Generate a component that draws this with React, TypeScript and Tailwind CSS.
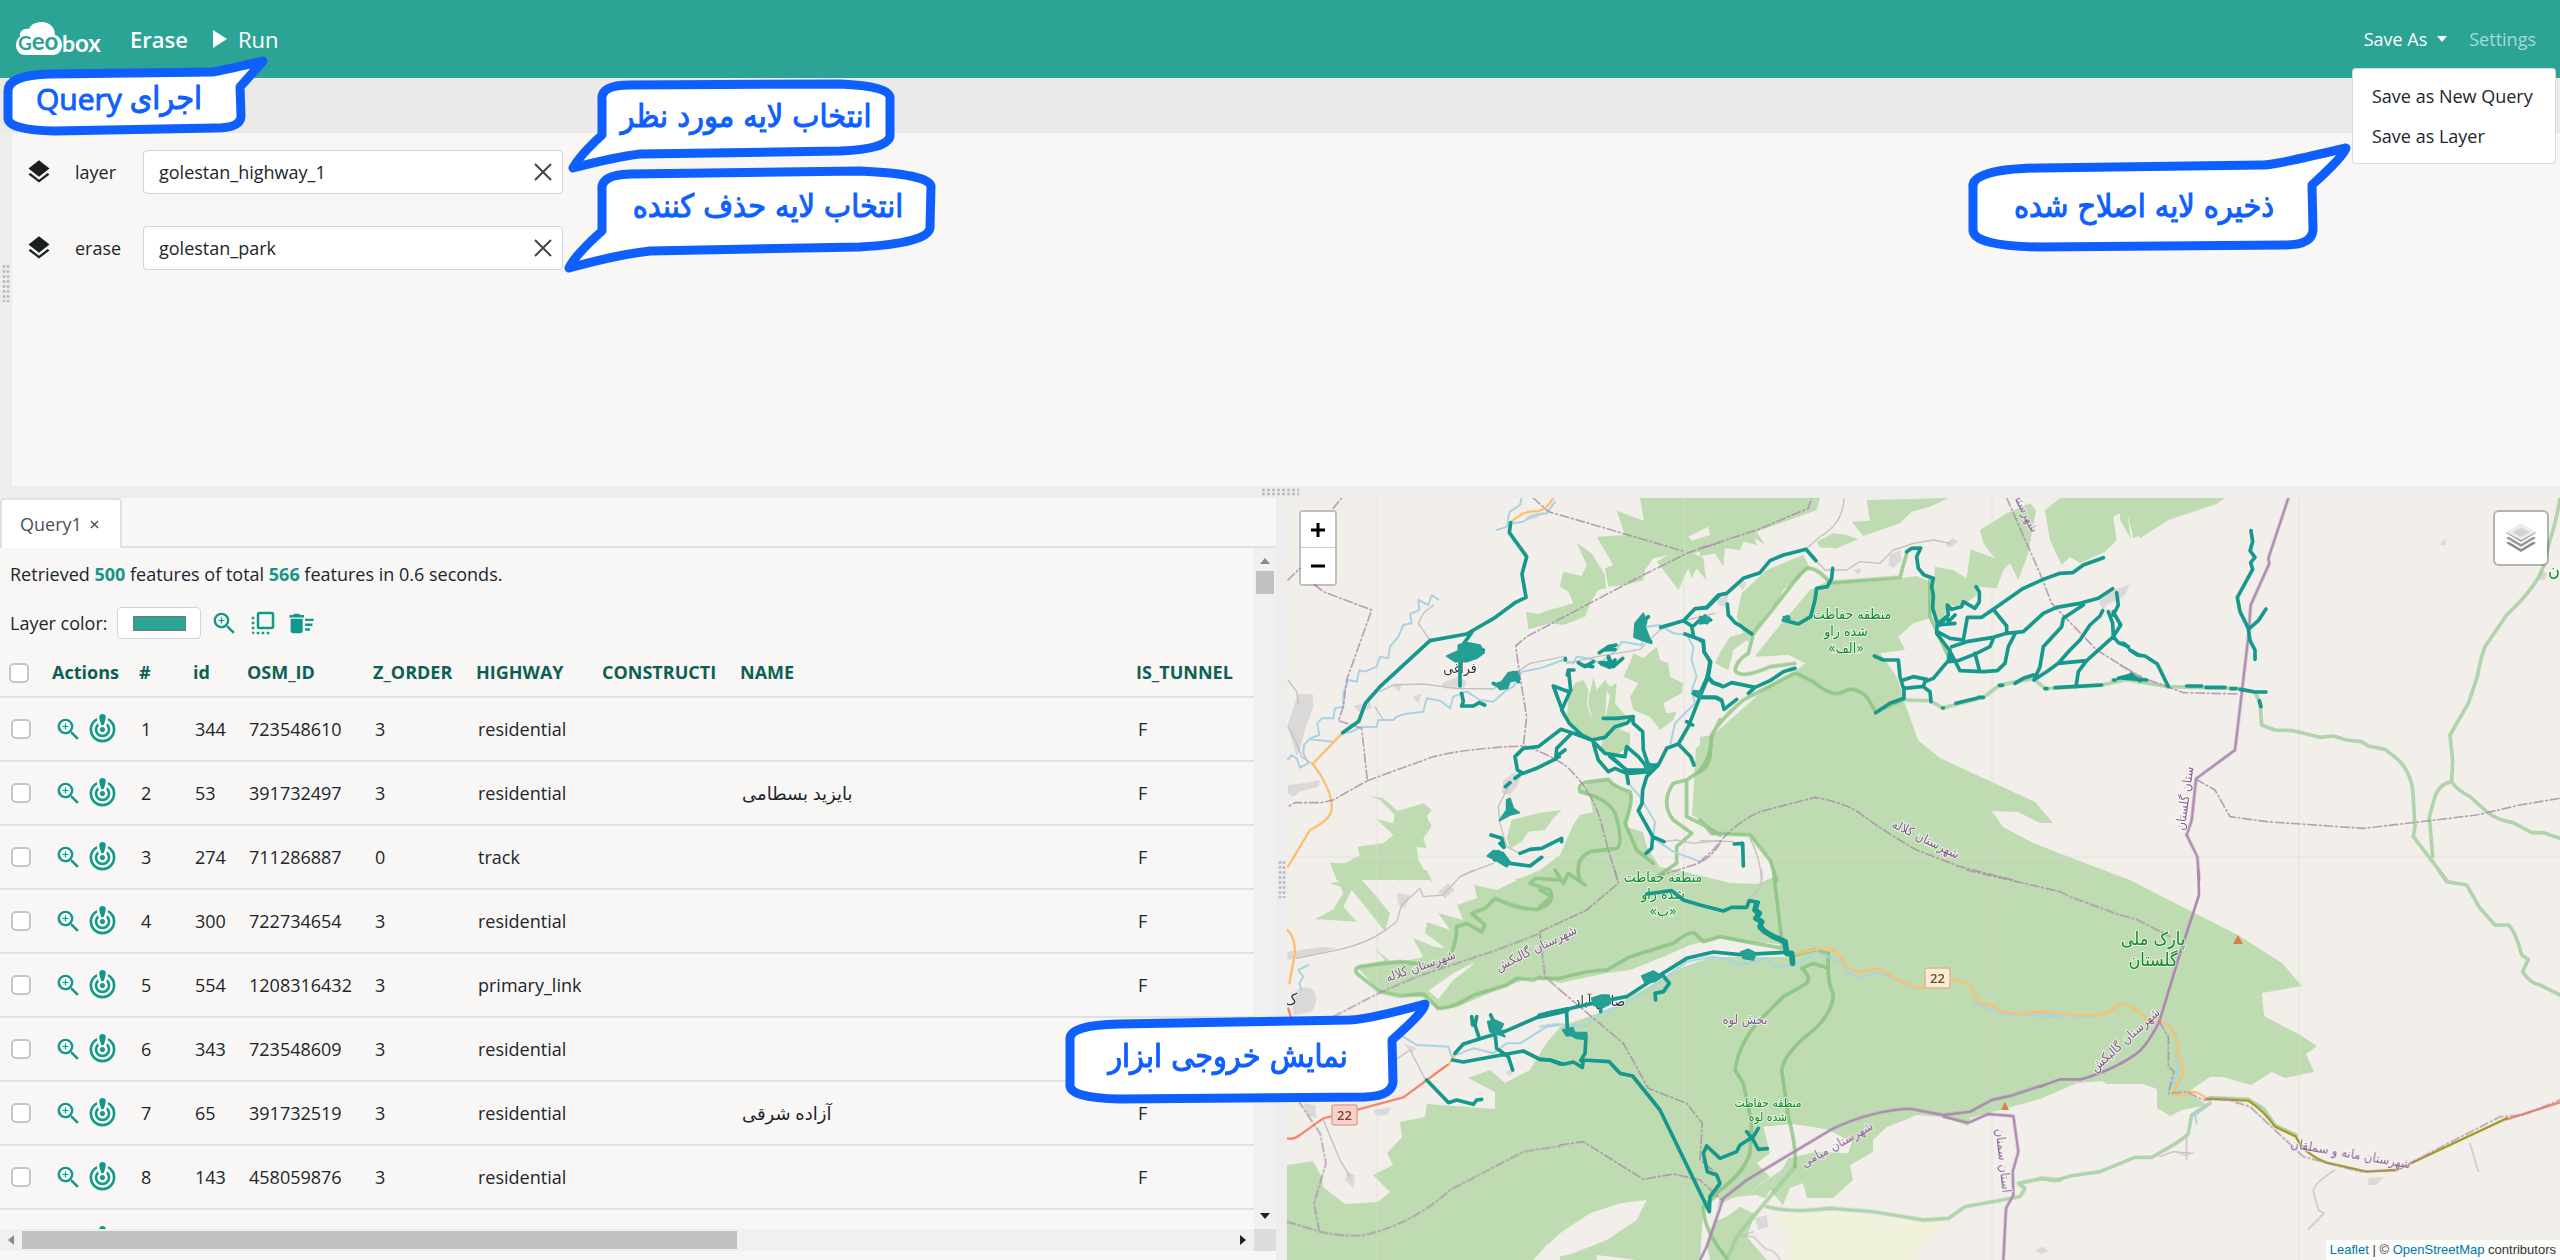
import React from "react";
import { MdLayers, MdZoomIn, MdFlipToFront, MdDeleteSweep, MdCrisisAlert } from "react-icons/md";

const FONT = "font-['Open_Sans','Noto_Sans','DejaVu_Sans',sans-serif]";

/* ------------------------------------------------------------------ */
/* Map data. Every tile has its own origin; one tile unit is 1/3 px.   */
/* ------------------------------------------------------------------ */

type Tile = "A" | "B" | "C" | "D" | "E" | "F" | "P";

const TILES: Record<Tile, string> = {
  A: "translate(1280 490) scale(0.33333)",
  B: "translate(1700 490) scale(0.33333)",
  C: "translate(2120 490) scale(0.33333)",
  D: "translate(1040 870) scale(0.33333)",
  E: "translate(1540 870) scale(0.33333)",
  F: "translate(2040 870) scale(0.33333)",
  P: "scale(1)",
};

type Shapes = Partial<Record<Tile, string>>;

const forest: Shapes = {
  P: `M1795 672L1837 695L1863 693L1876 713L1903 698L1918 740L1940 758L1983 778L2035 802L2053 823H2040L2018 812L1992 811L2003 827L2033 843L2077 860L2130 880L2157 894L2238 935L2282 963L2302 986L2262 993L2264 1016L2300 1035L2317 1046L2306 1054L2314 1072L2285 1078L2272 1072L2251 1085L2223 1077L2210 1077L2188 1092L2207 1105L2182 1110L2170 1116L2157 1108V1089L2143 1084H2107L2102 1081L2077 1083L2040 1099L1970 1118L1968 1126L1943 1117L1917 1115L1887 1127L1873 1140V1152L1850 1165L1853 1180L1833 1198H1807L1803 1183L1790 1188L1783 1205L1770 1190L1753 1220L1747 1237L1767 1260H1287V1165L1313 1161L1322 1177L1323 1187L1345 1204L1378 1202L1390 1192L1373 1175L1393 1165L1387 1153L1402 1137L1400 1122L1425 1117L1427 1104L1495 1109V1092L1468 1078L1490 1070L1505 1083L1530 1070L1545 1045L1560 1027L1607 1010L1683 967L1713 957L1785 957V940L1776 880L1768 855L1750 835H1713L1700 820L1692 815L1696 748L1704 742L1713 735L1767 687Z
      M1357 967L1385 960L1374 948L1390 961L1410 960L1423 957L1413 938L1435 947L1445 948L1425 933L1427 922L1450 930L1438 913L1463 920L1457 905L1477 898L1474 885L1497 890L1513 882L1540 870L1560 855L1573 825L1580 815L1593 812L1590 797L1580 790L1590 782L1607 780L1632 795L1630 813L1627 827L1643 832L1647 847L1660 867L1690 873L1730 883L1757 884L1776 876L1787 945L1767 943L1740 942L1720 938L1690 945L1663 957L1630 970L1607 973L1560 983L1540 978L1523 980L1490 993L1457 1007L1437 1010L1428 998L1400 995L1380 992Z`,
  A: `M1010 62L1092 92L1080 24H1320V170L1240 190L1270 205L1278 270L1250 235L1235 265L1225 235L1195 300L1150 240L1130 215L1165 195L1120 205L1095 240L1090 270L1040 285L985 290L975 235L1000 225L950 140L1035 135Z
      M890 158L935 190L975 255L978 295L955 300L930 340L915 380L850 405L810 400L745 418L738 365L775 372L800 362L828 355L880 340L865 305L840 290L850 245L905 258L920 225Z
      M1060 490L1090 505L1130 470L1140 510L1165 520L1170 560L1210 580L1205 610L1150 640L1160 670L1190 665L1180 690L1140 720L1110 680L1060 660L1050 620L1075 580L1030 560L1050 520Z
      M860 690L865 620L885 580L910 570L930 610L940 560L950 600L975 570L990 590L1010 580L1005 640L1040 680L1030 710L980 740L930 745L890 720Z
      M970 740L1010 715L1050 730L1050 770L1000 800L960 780Z
      M695 990L780 968L845 960L820 985L795 1020L745 1025L725 1055L690 1075L680 1045Z
      M150 1118L195 1120L240 1095L232 1070L310 1060L340 1035L290 988L340 1000L345 965L430 940L455 960L440 980L455 1008L430 1045L440 1075L490 1115L440 1075L410 1070L415 1110L450 1170H170Z
      M268 918L310 925L355 965L345 975L300 930Z
      M700 1170L750 1155L830 1170Z`,
  B: `M0 24H360L350 60L170 125L195 165L165 145L170 165L130 155L120 180L75 175L70 230L45 190L0 200Z
      M500 30L745 24L690 50L635 65L600 100L490 138L455 95L510 92Z
      M350 155L400 130L440 135L475 148L410 175L360 172Z
      M840 120L920 70L990 40L1008 60L985 190L955 270L930 220L910 240L890 295L840 290L825 320L780 350L750 345L715 405L695 360L705 230L760 240L800 265L812 178L885 205L850 160Z
      M1035 60L1080 24H1320V135L1300 145L1280 60L1240 80L1250 150L1215 185L1140 220L1110 200L1085 225L1050 150Z
      M285 545L315 520L265 495L160 505L220 430L330 300L380 275L600 265L650 258L690 275V385L640 400L595 440L615 480L540 490L590 560L612 625L527 668L410 620Z
      M130 430L110 380L125 310L200 240L310 195L330 235L250 300L200 400L150 470L140 450L100 480L85 540L45 520L65 480L90 440Z
      M0 740L40 735L25 830L0 845Z`,
  C: `M0 24H315L290 42L145 90L60 145L20 50L32 145L0 90Z`,
  D: `M870 40L960 25L1010 80L1050 130L1035 185L1000 140L955 85L935 60L910 110L950 155L870 150L825 148L880 118L910 70L885 10L920 0L940 40L900 50Z
      M1045 0L1080 35L1065 0ZM1140 0L1180 40L1160 0Z`,
};

const clearings: Shapes = {
  A: `M1285 110L1225 140L1235 152L1290 135ZM930 570L920 640L940 700L925 640ZM980 600L975 690L990 620Z`,
  B: `M105 545L130 500L150 440L215 350L240 345L235 370L200 430L165 500L265 495L315 520L285 535L210 555L120 562Z`,
  D: `M1165 362L1240 310L1305 275L1290 292L1240 330L1195 388ZM1480 1170L1520 1125L1560 1095V1170Z`,
  E: `M0 1150L60 1090L150 1030L240 1000L320 990L290 1050L200 1110L100 1150L20 1170H0ZM170 1155L290 1170H170Z
      M530 0L560 0L650 40L655 0Z
      M670 770L760 762L860 778L935 815L925 850L830 845L745 865L725 900L680 930L610 980L690 920L650 880L690 850Z
      M590 980L650 975L690 990L640 1030L600 1010L560 1040L510 1060L540 1000Z
      M490 1010L540 980L520 1060L500 1120L510 1170H480Z`,
};

const meadow: Shapes = {
  E: `M690 1040L870 1025L1150 1055L1250 1035L1190 1080L1120 1170H740L750 1100Z`,
};

const builtUp: Shapes = {
  A: `M55 612H98L100 650L75 720L60 780L50 800L24 710V700ZM24 885L80 878L120 870L115 890L60 905L40 920L24 910ZM485 580L535 560L560 575L550 600L490 595ZM222 648L270 635L275 655L235 665ZM330 585L365 580L360 605ZM398 622L425 610L415 640ZM670 870L700 850L725 855L710 890L690 915L665 910ZM740 78L790 65L770 85L740 90Z`,
  B: `M565 225L570 195L600 180L605 210L580 235ZM735 165L755 145L775 155L750 172ZM105 280L140 275L130 300ZM50 330L85 310L80 350L55 345ZM1240 300L1285 285L1270 320L1220 345L1210 360L1195 335ZM460 240L485 235L475 255Z`,
  C: `M960 165L975 145L978 165ZM0 295L30 285L15 315L0 320ZM1250 270L1262 240L1282 250L1275 270Z`,
  D: `M742 245L850 230L890 235L800 262L742 270ZM757 380Q770 350 800 352T828 390T800 430T760 435ZM1070 70L1110 75L1095 115L1075 105ZM1195 65L1225 40L1245 60L1215 85ZM1090 520L1130 535L1115 550ZM1000 720L1055 712L1040 735L1010 738ZM920 905L945 915L940 955L915 930ZM1395 605L1420 600L1410 620ZM790 700L825 705L830 745L800 735Z`,
  E: `M645 1045L680 1035L685 1070L655 1080ZM1485 1140L1510 1130L1525 1145L1500 1152Z`,
  F: `M985 925L1030 920L1010 945L985 945ZM0 1135L25 1142L5 1150ZM405 848L455 848L440 860Z`,
};

const rivers: Shapes = {
  A: `M475 328L455 315L445 345L415 330L418 360L390 372L395 400L370 405L355 440L330 470L325 505L300 500L290 530L255 545L238 540L230 575L205 570L190 610L190 650L165 655L160 685L125 685L112 700L118 735L90 745L72 765L70 790L85 820L60 833L50 805L35 795L24 808
      M90 748L160 755L190 728L215 725L240 712L290 710L295 690L340 690L350 680L375 672L430 665L440 625L480 632L510 655L520 620L560 605L600 630L640 635L680 600L700 590L725 545L780 535L850 510L880 520L890 500L940 508L960 520L1010 480L1025 455L1085 465L1100 410L1140 405L1180 430L1220 435L1240 470L1235 510L1250 560L1235 600L1245 640L1185 700L1172 760
      M725 24L720 45L690 65L685 80L682 110L650 120M825 35L800 70L760 76L730 95L700 100M1045 880L1080 920L1125 995L1120 1045L1180 1085L1260 1115`,
  D: `M1090 500L1130 525L1225 530L1235 560L1300 535L1360 550L1400 520L1440 520L1520 470L1560 465M805 285L775 300L790 320L778 340L785 360`,
  E: `M0 470L50 462L130 470L190 425L260 400L340 350L440 275L520 260L570 270L600 285L680 265L705 288L760 288L830 247L905 275L925 312L965 322L1010 306L1070 330L1130 358M1300 395L1320 406L1385 432L1560 440`,
  F: `M0 431L170 442M380 455L405 490L415 520L408 560L415 600L400 640M470 760L465 735L500 710`,
};

const minorRoads: Shapes = {
  A: `M24 570L50 605L55 640M24 710L50 760L65 800L98 822M450 450L415 400L430 370L460 345M300 605L340 585L430 582L530 595L640 597L690 560L750 520L850 500M860 520L950 500L1010 490L1080 478L1140 420L1220 390L1305 370M690 880L655 950L660 1000L680 1070L720 1090M640 1120L600 1135L540 1160M1152 1055L1190 1050L1240 1060L1320 1052M285 650L310 690`,
  B: `M432 24Q430 100 360 140L320 175M348 212L375 240L440 240L480 215L540 220L580 180L640 160L700 150L750 160M0 1052L100 1055M150 1045Q180 1100 185 1170`,
  D: `M770 265L900 238Q980 220 1030 185L1070 155L1085 105L1140 55L1150 80L1210 75L1260 20L1300 0M1050 580L1110 540L1160 635M1020 690V640M850 750L900 870L930 920`,
  E: `M665 0Q670 60 630 85M640 1085L600 1100L640 1100L680 1140Q700 1135 720 1170`,
  F: `M885 900Q820 940 820 965L835 1020L852 1030L805 1078M1290 820L1315 905M440 800V870M360 860L400 845L460 850`,
};

const parkEdges: Shapes = {
  A: `M900 905Q890 880 930 875L985 868Q1000 890 1050 905Q1062 930 1035 1000L1070 1080L1120 1120M900 905Q1000 930 1010 985Q1030 1065 1010 1075L930 1085Q880 1110 900 1170M1320 690L1295 740Q1290 820 1250 850L1220 870V980L1280 1010L1320 1035M1220 870L1180 880Q1140 940 1180 990L1235 1030L1190 1070V1120L1130 1160`,
  B: `M0 990L35 1030L150 1035L210 1110L230 1170M0 845Q25 830 30 800L35 735Q60 690 130 630L285 548M285 520L210 530Q120 570 105 540Q110 510 145 490L160 430L240 330Q300 250 320 235Q350 230 390 278L600 262L620 190M690 270V380L745 500M285 548L340 575Q400 625 430 605T500 620L527 665L612 628`,
  D: `M1020 365L950 310Q940 290 970 288L1080 275L1200 290Q1250 250 1250 170L1280 160L1325 185L1335 165L1295 130L1335 115L1365 85Q1440 120 1490 118Q1550 100 1530 60L1470 40L1485 25L1560 30M1020 365L1080 378L1150 372L1195 415Q1240 415 1300 375L1400 345L1430 325L1480 330L1500 322`,
  E: `M765 255L820 240L865 250Q860 340 880 370Q880 440 790 505Q730 560 725 600L745 740Q770 830 765 890M865 295L820 280L785 295Q815 320 800 340L730 380L690 420Q600 500 585 600L610 640L635 760L630 850Q610 910 540 960L490 1010Q490 1080 560 1165M0 325L60 325Q150 300 200 300L270 260L400 220Q450 180 465 190L490 215L540 200L600 212L730 235M700 0L728 235M0 60L35 80L0 110M45 0L70 40L85 10L135 45`,
};

const softEdges: Shapes = {
  B: `M620 630L690 632L728 654L850 622L900 585L1000 565L1035 596L1205 585L1320 560`,
  C: `M0 565L145 590L360 596L405 606L420 640L425 705L465 720L520 722L600 742L640 738L680 750L725 755L745 768L795 778L830 805Q880 850 880 930L885 1010L880 1040L930 1105L980 1170M1320 24Q1310 90 1290 150L1270 230Q1250 290 1160 375L1095 470Q1080 510 1072 560L1045 640L990 735L998 810L995 875Q1010 900 1050 920L1100 965Q1130 990 1180 998L1235 1028H1270L1320 1045M995 875Q960 880 945 920L928 980L938 1100`,
  E: `M765 890L640 1040L590 1100L560 1170M680 1010Q760 1030 870 1015L1000 1025L1150 1050L1225 1045L1275 1010L1440 980L1455 955L1435 940L1510 925L1560 930`,
  F: `M1195 0L1220 35L1280 45L1320 115L1365 165H1405Q1425 180 1445 255L1465 268L1448 305Q1470 340 1500 345L1560 375M510 700L455 735L445 790Q430 810 335 862H285L180 905L90 918L45 932L0 925M510 683L625 688L670 716L705 766L768 795`,
};

const districtLines: Shapes = {
  A: `M24 270L60 235M105 285L130 305L275 360L200 570L190 650L175 692L245 715L262 872L160 930L125 938H45L24 950M262 872L460 800Q560 775 730 768L740 680L720 560L707 468L740 440L1080 260L1225 188L1320 158M760 24L805 65L960 110L1215 185M160 55L185 24M735 768Q850 810 880 850Q930 900 960 985L985 1080L1012 1170M1320 1060Q1290 1110 1240 1125L1130 1160`,
  B: `M0 175L170 120L325 55L335 24M0 1115L40 1080Q100 1000 180 965L345 922Q440 940 480 970Q560 1030 650 1080L780 1130L940 1170M920 24L1020 250L1055 340L1190 480L1320 560`,
  C: `M0 525L60 560L190 608L355 612M228 868L285 900L330 980L440 995L730 1015L930 992L1070 975L1200 945L1320 925`,
  D: `M880 440L1015 370L1130 320L1370 240L1500 190M1500 190L1515 320L1560 360M742 1055L840 1085Q950 1110 1010 1085Q1130 1050 1230 960L1450 845L1560 828M775 692L840 790L858 880L822 1000L838 1085`,
  E: `M0 185L140 120L235 40L225 0M60 360L250 520L325 655L440 700L487 760L480 870L530 910M60 825L130 815L310 928L400 912L480 930L545 990M1280 0L1560 65`,
  F: `M60 65L90 80L240 135L290 148L390 200M358 455L385 500V590L402 605L385 670L440 665L490 690L560 688L630 710L790 860L960 905L1070 900L1380 740L1450 735L1560 690`,
};

const provinceLines: Shapes = {
  C: `M505 24L445 205L448 220L392 345L385 440L345 780L228 866L215 990L200 1035L232 1100L237 1170`,
  E: `M1510 645L1420 675L1355 690L1290 725L1210 735L1110 716Q1000 720 880 775L620 930L550 985L500 1130L480 1170M1210 740L1285 758L1345 732L1420 738L1435 845L1418 905L1420 975L1398 1015L1390 1170`,
  F: `M475 0L477 75L420 250L358 455Q320 530 290 550Q230 595 125 628H60L0 650`,
};

const primaryRoads: Shapes = {
  A: `M820 24Q800 60 770 64Q730 60 692 98M188 728L98 822L122 855Q160 920 155 960Q150 990 90 1020L24 1130`,
  D: `M742 180Q765 200 765 250L748 340M1245 552L1225 585`,
  E: `M765 252L830 238L870 235Q900 250 915 285Q950 320 1000 295Q1040 300 1060 325L1130 352H1155M1230 325L1290 345L1320 400L1355 405L1385 425L1450 432L1480 425L1510 427`,
  F: `M0 425L100 433L170 437Q210 430 240 400L270 410Q310 430 320 450L358 455Q410 465 415 550L430 605L400 670Q420 685 450 665Q480 665 500 688`,
};

const trunkRoads: Shapes = {
  D: `M1222 585L1090 682L950 720L850 745Q800 780 780 795T742 805M745 415L752 440`,
  F: `M1400 748L1560 697`,
};

const valleyRoad: Shapes = {
  F: `M500 686L625 692Q670 720 705 770L768 800Q790 850 860 878L980 905L1070 900L1400 745`,
};

const resultLines: Shapes = {
  A: `M692 98L688 128L740 200L726 252L738 322L705 338L640 386L560 432L450 452L300 590L256 640L236 694L188 728
      M575 428L550 462M540 500V588M545 610L550 635L545 648H580L598 638L614 645
      M1142 412L1210 392L1245 356L1280 354L1320 315M1210 392L1235 408L1240 436M1240 408L1265 385L1292 390M1275 378L1280 398
      M1215 432L1270 452L1272 485L1292 515L1285 560L1260 620L1225 710L1195 762L1160 775L1135 825L1100 860L1088 900L1086 940L1075 962L1110 1025L1118 1040L1152 1055M1118 1040L1115 1075L1098 1090M1195 762L1232 800L1242 825M1220 695L1238 705
      M1240 610L1260 622H1305L1320 630M1282 558L1300 578L1320 584
      M958 488L985 470L1008 465M970 480L1005 478M960 518L990 520L985 500L1000 530L1028 505M965 522L990 532L1005 510M895 518L915 530L940 515M905 525L938 530
      M856 505V510M862 555L865 540L882 540M866 545L872 600L845 660L868 700L905 735L935 750L975 742L1005 710L1040 700L1060 680L1010 685H970M866 605L820 588L845 655
      M935 750L880 730L843 718L775 770L730 775L705 800L712 840L730 850L770 835L830 805M870 735L830 775L828 800L855 780M828 800H838M725 850L705 865M690 878L676 890
      M1058 680L1060 700L1088 725L1090 780L1105 825L1130 825M940 755L975 790L1035 800L1040 770L1075 800L1100 830M940 760L955 810L985 845L1005 835L1040 850L1045 880M990 800L1040 840L1100 840L1130 825M1000 805L1050 850L1105 845
      M633 1035L665 1045L672 1072L660 1060M720 1090L750 1078L785 1075L845 1045V1055M690 1120L750 1128L785 1102
      M1085 400L1105 380M1095 440L1112 455M610 480L590 500M640 580L660 590M700 548L715 575M635 1092L645 1110M655 1085L660 1105`,
  B: `M0 354L20 352L55 315L80 310L130 265L180 248L210 212L250 195L318 178L348 212M82 342L85 375L105 398L125 410L155 432M398 235L395 265L382 290L350 295L345 330L332 380L295 402L250 390M262 380L265 392M0 390H28
      M0 450L10 455L12 485L30 515L22 560L0 610M22 560L38 578L70 590L95 578L165 592L210 572L250 545L285 535M165 592L145 610M0 622H50L65 630L72 658L110 628
      M620 185L635 175L662 174L650 200L655 235L672 255L700 265L695 290L700 315L698 355L712 400L710 430L748 480L780 542L850 545L892 542L915 520L925 470L945 432M712 405L765 400M715 400L745 375L742 345L755 358L785 350L790 335L825 355L838 335V305L828 290M720 405L740 380L745 395L765 375
      M712 425L750 445L790 450L802 382H845L880 358L970 295L1030 268L1080 250L1118 248L1150 225L1210 203M880 358L920 408V430M755 470L800 455L880 442L920 430L970 425L1030 370L1070 352L1140 340L1195 325L1238 296M750 480L745 515L775 512L830 490L870 470L880 445M755 500L700 565L675 575L670 590L690 605L693 635M610 570L640 560L680 568M612 595L665 590M523 498L550 510H595L600 560L612 600V625L570 640L527 668M825 490L838 540
      M1150 345L1090 385L1085 410L1030 470L1020 530L1002 570M1005 568L1040 545L1075 520L1110 480L1140 450L1170 405L1200 378L1208 362M945 580L970 565L1000 555M1075 520L1160 512L1240 440L1262 405L1245 375M1250 308L1255 345L1240 375V365M1225 365L1238 400L1240 440L1255 458L1285 470M1160 512L1135 545L1128 590
      M728 654H730M768 640L830 625M835 622H850M898 586H908M1035 596H1041M1065 593L1205 585M1240 570H1246M1255 565L1295 555L1320 572M1290 480L1320 497M103 1062L128 1060L130 1128`,
  C: `M393 122L398 155L390 182L405 202L392 218L398 238L352 322L360 365L385 415L390 452L405 480V508M438 357L415 392L385 418M0 460H12L25 472M33 482L52 495L75 498L112 522L145 590M5 564L80 570M20 562L35 552M200 588H245M258 592H315M333 596H348M360 598L405 606H438M418 632L423 650M0 400V408`,
  D: `M1245 550L1270 522L1330 503L1400 482L1520 430L1560 422M1295 440L1298 465M1310 440L1305 465L1317 502M1352 435L1365 465M1365 490L1370 535L1405 560L1418 600M1238 570L1270 576L1450 543L1500 568L1530 570L1560 582M1160 630L1218 690L1225 698L1250 690L1300 703L1310 690L1325 688`,
  E: `M0 438L80 418L180 395L260 380L340 328L440 265L520 246L600 254L735 247M370 318L388 340L370 365L345 370L347 390M182 400V425M80 425L82 480L105 500L138 498L135 550L122 572M0 568L30 570L70 583L100 576L127 592L130 570L208 575L240 610L278 618L360 720L508 1025L510 980L540 940L530 915L502 905L490 850L500 828L540 865L590 845L600 825L640 800L655 775M620 785L640 810L655 838L682 836M320 72L395 62L430 90L480 105L550 123L575 112H620L628 92L655 97`,
};

const resultThick: Shapes = {
  E: `M650 100L645 120L658 130L648 145L665 155L660 170L675 185L700 200L735 215L740 250L755 250L758 280M0 438L80 420`,
};

const resultBlobs: Shapes = {
  A: `M500 498L535 482V465L560 458L600 465L613 488L590 505L560 515L525 515ZM645 582L665 575L685 548L712 545L720 568L690 575L682 595L660 598ZM1065 400L1090 370L1100 395L1095 410L1105 435L1115 460L1090 452L1062 442ZM680 930L690 925L700 955L718 968L690 975L658 992L680 960ZM622 1098L640 1082L670 1088L692 1118L680 1130L650 1112ZM1090 820L1110 820L1120 835L1100 845ZM1240 602L1268 605L1260 625Z`,
  B: `M250 380L268 380L270 395L252 392ZM0 380L28 382L25 398L0 402Z`,
  D: `M1343 455L1365 450L1390 462L1382 480L1395 500L1372 492L1350 485Z`,
  E: `M155 385L185 375L207 375L212 400L185 415L160 405ZM305 318L340 303L368 320L345 335L315 338ZM602 246L625 238L648 250L640 270L610 265ZM68 480L98 473L108 495L80 498ZM105 488L140 488L138 508L110 505Z`,
};

interface LayerProps {
  data: Shapes;
  className: string;
  dash?: string;
}

/** Draws one feature class; widths are given in tile units. */
function MapLayer({ data, className, dash }: LayerProps) {
  return (
    <g className={className} strokeLinejoin="round" strokeLinecap="round" strokeDasharray={dash}>
      {(Object.keys(data) as Tile[]).map((t) => (
        <path key={t} transform={TILES[t]} d={data[t]} />
      ))}
    </g>
  );
}

interface LabelData {
  x: number;
  y: number;
  r?: number;
  s: number;
  c: string;
  t: string;
}

const PURPLE = "fill-[#875a90]";
const GREEN = "fill-[#0d8a2c]";
const labels: LabelData[] = [
  { x: 1460, y: 673, s: 14, c: "fill-[#333333]", t: "فراغی" },
  { x: 1852, y: 619, s: 14, c: GREEN, t: "منطقه حفاظت" },
  { x: 1846, y: 636, s: 14, c: GREEN, t: "شده زاو" },
  { x: 1846, y: 653, s: 14, c: GREEN, t: "«الف»" },
  { x: 1663, y: 882, s: 14, c: GREEN, t: "منطقه حفاظت" },
  { x: 1663, y: 899, s: 14, c: GREEN, t: "شده زاو" },
  { x: 1663, y: 916, s: 14, c: GREEN, t: "«ب»" },
  { x: 1768, y: 1107, s: 12, c: GREEN, t: "منطقه حفاظت" },
  { x: 1768, y: 1121, s: 12, c: GREEN, t: "شده لوه" },
  { x: 2153, y: 945, s: 18, c: GREEN, t: "پارک ملی" },
  { x: 2153, y: 966, s: 18, c: GREEN, t: "گلستان" },
  { x: 2554, y: 576, s: 18, c: GREEN, t: "ن" },
  { x: 1600, y: 1006, s: 14, c: "fill-[#333333]", t: "صادق آباد" },
  { x: 1291, y: 1005, s: 16, c: "fill-[#333333]", t: "ک" },
  { x: 1745, y: 1024, s: 13, c: PURPLE, t: "بخش لوه" },
  { x: 1924, y: 843, r: 26, s: 13, c: PURPLE, t: "شهرستان کلاله" },
  { x: 1422, y: 970, r: -19, s: 13, c: PURPLE, t: "شهرستان کلاله" },
  { x: 1538, y: 952, r: -26, s: 13, c: PURPLE, t: "شهرستان گالیکش" },
  { x: 2128, y: 1043, r: -42, s: 13, c: PURPLE, t: "شهرستان گالیکش" },
  { x: 2189, y: 799, r: -82, s: 13, c: PURPLE, t: "ستان گلستان" },
  { x: 2023, y: 516, r: 64, s: 13, c: PURPLE, t: "شهرستا" },
  { x: 1839, y: 1148, r: -29, s: 13, c: PURPLE, t: "شهرستان میامی" },
  { x: 1999, y: 1161, r: 84, s: 13, c: PURPLE, t: "استان سمنان" },
  { x: 2350, y: 1158, r: 10, s: 13, c: PURPLE, t: "شهرستان مانه و سملقان" },
];

function Shield({ x, y, className, textClass }: { x: number; y: number; className: string; textClass: string }) {
  return (
    <g>
      <rect x={x} y={y} width="25" height="20" rx="2" className={className} strokeWidth="1.5" />
      <text x={x + 12.5} y={y + 15} textAnchor="middle" fontSize="13" fontWeight="600" className={textClass}>
        22
      </text>
    </g>
  );
}

function MapView() {
  return (
    <section aria-label="Map" className="relative h-full overflow-hidden bg-[#f2efea]">
      <svg
        className="absolute inset-0 h-full w-full"
        viewBox="1287 498 1273 762"
        preserveAspectRatio="xMinYMin slice"
        aria-hidden="true"
      >
        <MapLayer data={forest} className="fill-[#bfdbb1]" />
        <MapLayer data={clearings} className="fill-[#f2efea]" />
        <MapLayer data={meadow} className="fill-[#f0f2dc]" />
        <MapLayer data={builtUp} className="fill-[#dbd9d8]" />
        <path d="M1377 498V1260M1684 498V1260M1992 498V1260M2299 498V1260M1287 857H2560" className="stroke-[#d8dcd2] opacity-60" />
        <MapLayer data={softEdges} className="fill-none stroke-[#9fcd9b] stroke-[11] opacity-80" />
        <MapLayer data={parkEdges} className="fill-none stroke-[#84c07d] stroke-[11] opacity-75" />
        <MapLayer data={rivers} className="fill-none stroke-[#a9d3e3] stroke-[6]" />
        <MapLayer data={minorRoads} className="fill-none stroke-[#c3c0c2] stroke-[4]" />
        <MapLayer data={primaryRoads} className="fill-none stroke-[#fbbf72] stroke-[7]" />
        <MapLayer data={trunkRoads} className="fill-none stroke-[#f98666] stroke-[7]" />
        <MapLayer data={valleyRoad} className="fill-none stroke-[#a89a26] stroke-[7]" />
        <MapLayer data={districtLines} className="fill-none stroke-[#a98bab] stroke-[5] opacity-80" dash="26 9 5 9" />
        <MapLayer data={provinceLines} className="fill-none stroke-[#ab89b0] stroke-[8]" />
        <path d="M2233 944l5-9l5 9zM2001 1110l4-8l4 8z" className="fill-[#d97f42]" />
        <g className="font-['DejaVu_Sans_Condensed','DejaVu_Sans',sans-serif]">
          {labels.map((l, i) => (
            <text
              key={i}
              x={l.x}
              y={l.y}
              fontSize={l.s}
              textAnchor="middle"
              direction="rtl"
              transform={l.r ? `rotate(${l.r} ${l.x} ${l.y})` : undefined}
              className={l.c}
              stroke="#ffffff"
              strokeOpacity="0.6"
              strokeWidth="2"
              paintOrder="stroke"
            >
              {l.t}
            </text>
          ))}
        </g>
        <MapLayer data={resultLines} className="fill-none stroke-[#16998c] stroke-[11]" />
        <MapLayer data={resultThick} className="fill-none stroke-[#16998c] stroke-[17]" />
        <MapLayer data={resultBlobs} className="fill-[#259f93] stroke-[#259f93] stroke-[5]" />
        <Shield x={1332} y={1105} className="fill-[#f6d3c8] stroke-[#e3a594]" textClass="fill-[#7d4030]" />
        <Shield x={1925} y={968} className="fill-[#fbeada] stroke-[#d9b98c]" textClass="fill-[#6b5320]" />
      </svg>

      <div className="absolute top-3 left-3 flex w-[38px] flex-col rounded border-2 border-black/20 bg-clip-padding">
        <button type="button" aria-label="Zoom in" className="flex h-9 items-center justify-center rounded-t-xs border-b border-[#cccccc] bg-white">
          <svg viewBox="0 0 16 16" className="size-4 stroke-black stroke-[3]"><path d="M8 1V15M1 8H15" /></svg>
        </button>
        <button type="button" aria-label="Zoom out" className="flex h-9 items-center justify-center rounded-b-xs bg-white">
          <svg viewBox="0 0 16 16" className="size-4 stroke-black stroke-[3]"><path d="M1 8H15" /></svg>
        </button>
      </div>

      <button type="button" aria-label="Layers" className="absolute top-3 right-[11px] flex size-14 items-center justify-center rounded-md border-2 border-black/25 bg-white bg-clip-padding">
        <svg viewBox="0 0 32 30" className="h-[30px] w-8">
          <path d="M1 20L16 12L31 20L16 29Z" fill="#8d8d8d" />
          <path d="M1 17L16 9L31 17L16 26Z" fill="#ffffff" />
          <path d="M1 15L16 7L31 15L16 24Z" fill="#9a9a9a" />
          <path d="M1 12L16 4L31 12L16 21Z" fill="#ffffff" />
          <path d="M1 10L16 2L31 10L16 19Z" fill="#a5a5a5" />
          <path d="M1 9L16 0L31 9L16 17Z" fill="#ededed" />
          <path d="M7 9L16 5L25 9L16 14Z" fill="#d2d2d2" />
        </svg>
      </button>

      <p className="absolute right-0 bottom-0 bg-white/80 px-1 font-['Liberation_Sans',sans-serif] text-[13px] leading-5 text-[#333333]">
        <a href="#leaflet" className="text-[#0078a8]">Leaflet</a> | ©{" "}
        <a href="#osm" className="text-[#0078a8]">OpenStreetMap</a> contributors
      </p>
    </section>
  );
}

/* ------------------------------------------------------------------ */
/* Header                                                              */
/* ------------------------------------------------------------------ */

function Logo() {
  return (
    <svg viewBox="0 0 88 34" className="h-[34px] w-[88px]" role="img" aria-label="Geobox">
      <path d="M9 33C3 33 0 28 0 23C0 19 2 16 4 15C3 9 8 6 13 7C15 2 20 0 26 0C33 0 39 5 39 13C43 14 46 18 46 23C46 29 42 33 37 33Z" fill="#ffffff" />
      <g className="font-['Lato',sans-serif]" fontWeight="700" fontSize="24">
        <text x="2" y="28" fill="#2ba395"><tspan fontSize="19">G</tspan>eo</text>
        <text x="46" y="30" fill="#ffffff"><tspan fontSize="23">b</tspan>ox</text>
      </g>
    </svg>
  );
}

function Header() {
  return (
    <header className="relative flex h-[78px] shrink-0 items-center bg-[#2ba395] pr-6 pl-4 text-white">
      <Logo />
      <h1 className="ml-[26px] text-[22px] font-semibold">Erase</h1>
      <button type="button" className="ml-6 flex items-center gap-[10px] text-[22px]">
        <svg viewBox="0 0 16 20" className="h-5 w-4" fill="#ffffff" aria-hidden="true"><path d="M1 1L15 10L1 19Z" /></svg>
        Run
      </button>
      <nav className="ml-auto flex items-center gap-[22px] text-[18px]">
        <button type="button" aria-expanded="true" className="flex items-center gap-[10px]">
          Save As
          <svg viewBox="0 0 10 6" className="h-[6px] w-[10px]" fill="#ffffff" aria-hidden="true"><path d="M0 0H10L5 6Z" /></svg>
        </button>
        <a href="#settings" className="text-white/60">Settings</a>
      </nav>
      <ul className="absolute top-[68px] right-1 z-10 flex h-24 w-[204px] flex-col justify-center rounded border border-black/15 bg-white text-[18px] leading-10 text-[#212529]">
        <li><button type="button" className="pl-[19px]">Save as New Query</button></li>
        <li><button type="button" className="pl-[19px]">Save as Layer</button></li>
      </ul>
    </header>
  );
}

/* ------------------------------------------------------------------ */
/* Parameters                                                          */
/* ------------------------------------------------------------------ */

function ParamField({ name, value }: { name: string; value: string }) {
  return (
    <div className="flex h-[44px] items-center">
      <MdLayers className="size-7 text-[#1c1f22]" aria-hidden="true" />
      <label htmlFor={`param-${name}`} className="ml-[22px] w-[68px] text-[18px] text-[#212529]">{name}</label>
      <div className="flex h-[44px] w-[420px] items-center rounded border border-[#ced4da] bg-white pr-[10px]">
        <input id={`param-${name}`} type="text" defaultValue={value} className="min-w-0 flex-1 bg-transparent px-[15px] text-[18px] text-[#212529] outline-none" />
        <button type="button" aria-label={`Clear ${name}`}>
          <svg viewBox="0 0 18 18" className="size-[18px] stroke-[#444444] stroke-2"><path d="M1 1L17 17M17 1L1 17" /></svg>
        </button>
      </div>
    </div>
  );
}

function Dots({ vertical = false }: { vertical?: boolean }) {
  return (
    <span
      aria-hidden="true"
      className={
        vertical
          ? "h-[38px] w-[8px] bg-[radial-gradient(circle,#bcbcbc_1px,transparent_2px)] bg-[size:4px_5px]"
          : "h-[8px] w-[38px] bg-[radial-gradient(circle,#bcbcbc_1px,transparent_2px)] bg-[size:5px_4px]"
      }
    />
  );
}

/* ------------------------------------------------------------------ */
/* Results table                                                       */
/* ------------------------------------------------------------------ */

interface Feature {
  n: number;
  id: string;
  osm: string;
  z: string;
  highway: string;
  name: string;
}

const features: Feature[] = [
  { n: 1, id: "344", osm: "723548610", z: "3", highway: "residential", name: "" },
  { n: 2, id: "53", osm: "391732497", z: "3", highway: "residential", name: "بایزید بسطامی" },
  { n: 3, id: "274", osm: "711286887", z: "0", highway: "track", name: "" },
  { n: 4, id: "300", osm: "722734654", z: "3", highway: "residential", name: "" },
  { n: 5, id: "554", osm: "1208316432", z: "3", highway: "primary_link", name: "" },
  { n: 6, id: "343", osm: "723548609", z: "3", highway: "residential", name: "" },
  { n: 7, id: "65", osm: "391732519", z: "3", highway: "residential", name: "آزاده شرقی" },
  { n: 8, id: "143", osm: "458059876", z: "3", highway: "residential", name: "" },
];

const CHECKBOX = "block size-5 appearance-none rounded-[5px] border-2 border-[#c3c5c7] bg-white checked:bg-[#2ba395]";

function RowActions({ n }: { n: number }) {
  return (
    <div className="flex items-center gap-1 text-[#12988a]">
      <button type="button" aria-label={`Zoom to feature ${n}`}><MdZoomIn className="size-[29px]" /></button>
      <button type="button" aria-label={`Flash feature ${n}`}><MdCrisisAlert className="size-[31px]" /></button>
    </div>
  );
}

function ResultsTable() {
  return (
    <table className="w-full table-fixed border-collapse text-left text-[18px] text-[#212529]">
      <colgroup>
        <col className="w-[44px]" />
        <col className="w-[87px]" />
        <col className="w-[54px]" />
        <col className="w-[54px]" />
        <col className="w-[126px]" />
        <col className="w-[103px]" />
        <col className="w-[126px]" />
        <col className="w-[138px]" />
        <col />
        <col className="w-[126px]" />
      </colgroup>
      <thead>
        <tr className="h-12 border-b-2 border-[#dee2e6] text-[#0d5f55]">
          <th className="pl-[9px]"><input type="checkbox" aria-label="Select all" className={CHECKBOX} /></th>
          <th className="pl-2">Actions</th>
          <th className="pl-2">#</th>
          <th className="pl-2">id</th>
          <th className="pl-2">OSM_ID</th>
          <th className="pl-2">Z_ORDER</th>
          <th className="pl-2">HIGHWAY</th>
          <th className="pl-2">CONSTRUCTI</th>
          <th className="pl-2">NAME</th>
          <th className="pl-2">IS_TUNNEL</th>
        </tr>
      </thead>
      <tbody>
        {features.map((f) => (
          <tr key={f.n} className="h-16 border-b-2 border-[#dee2e6]">
            <td className="pl-[11px]"><input type="checkbox" aria-label={`Select row ${f.n}`} className={CHECKBOX} /></td>
            <td className="pl-[10px]"><RowActions n={f.n} /></td>
            <td className="pl-[10px]">{f.n}</td>
            <td className="pl-[10px]">{f.id}</td>
            <td className="pl-[10px]">{f.osm}</td>
            <td className="pl-[10px]">{f.z}</td>
            <td className="pl-[10px]">{f.highway}</td>
            <td />
            <td className="pl-[10px]"><span dir="rtl" lang="fa">{f.name}</span></td>
            <td className="pl-[10px]">F</td>
          </tr>
        ))}
        <tr className="h-16">
          <td className="pl-[11px]"><input type="checkbox" aria-label="Select row 9" className={CHECKBOX} /></td>
          <td className="pl-[10px]"><RowActions n={9} /></td>
          <td colSpan={8} />
        </tr>
      </tbody>
    </table>
  );
}

function ResultsPanel() {
  return (
    <section className="flex min-h-0 min-w-0 flex-col bg-[#f8f7f6]">
      <div role="tablist" className="flex h-[50px] shrink-0 border-b-2 border-[#dee2e6]">
        <div className="-mb-[2px] flex h-[50px] w-[122px] items-center rounded-t border-2 border-b-0 border-[#dee2e6] bg-white pl-[18px] text-[18px] text-[#495057]">
          <button type="button" role="tab" aria-selected="true">Query1</button>
          <button type="button" aria-label="Close Query1" className="ml-2">
            <svg viewBox="0 0 10 10" className="size-[9px] stroke-[#495057] stroke-[1.5]"><path d="M1 1L9 9M9 1L1 9" /></svg>
          </button>
        </div>
      </div>
      <div className="grid min-h-0 flex-1 grid-cols-[minmax(0,1fr)_22px] grid-rows-[minmax(0,1fr)_22px]">
        <div className="overflow-hidden">
          <p className="px-[10px] pt-[14px] text-[18px] leading-6 text-[#212529]">
            Retrieved <b className="text-[#199587]">500</b> features of total <b className="text-[#199587]">566</b> features in 0.6 seconds.
          </p>
          <div className="mt-[21px] flex h-8 items-center pl-[10px] text-[18px] text-[#212529]">
            <label htmlFor="layer-color" className="w-[107px]">Layer color:</label>
            <button id="layer-color" type="button" aria-label="Layer color" className="flex h-8 w-[84px] items-center justify-center rounded border border-[#ced4da] bg-white">
              <span className="h-[15px] w-[53px] border border-[#777777] bg-[#2ba395]" />
            </button>
            <div className="ml-[9px] flex items-center gap-[9px] text-[#12988a]">
              <button type="button" aria-label="Zoom to layer"><MdZoomIn className="size-[29px]" /></button>
              <button type="button" aria-label="Bring to front"><MdFlipToFront className="size-[30px]" /></button>
              <button type="button" aria-label="Delete all"><MdDeleteSweep className="size-[29px]" /></button>
            </div>
          </div>
          <div className="mt-[10px]">
            <ResultsTable />
          </div>
        </div>
        <div className="flex flex-col items-center bg-[#f0f0f0]" aria-hidden="true">
          <svg viewBox="0 0 10 6" className="mt-[10px] h-[6px] w-[10px]" fill="#8a8a8a"><path d="M0 6H10L5 0Z" /></svg>
          <span className="mt-[7px] h-[23px] w-[18px] bg-[#c1c1c1]" />
          <svg viewBox="0 0 10 6" className="mt-auto mb-[10px] h-[6px] w-[10px]" fill="#222222"><path d="M0 0H10L5 6Z" /></svg>
        </div>
        <div className="flex items-center bg-[#f0f0f0]" aria-hidden="true">
          <svg viewBox="0 0 6 10" className="ml-2 h-[10px] w-[6px]" fill="#8a8a8a"><path d="M6 0V10L0 5Z" /></svg>
          <span className="ml-2 h-[18px] w-[57%] bg-[#c1c1c1]" />
          <svg viewBox="0 0 6 10" className="mr-2 ml-auto h-[10px] w-[6px]" fill="#222222"><path d="M0 0V10L6 5Z" /></svg>
        </div>
        <div className="bg-[#dcdcdc]" />
      </div>
      <div className="h-[9px] shrink-0" />
    </section>
  );
}

/* ------------------------------------------------------------------ */
/* Callouts laid over the page                                         */
/* ------------------------------------------------------------------ */

interface CalloutProps {
  box: string;
  viewBox: string;
  path: string;
  text: string;
  children: React.ReactNode;
}

function Callout({ box, viewBox, path, text, children }: CalloutProps) {
  return (
    <div className={`pointer-events-none absolute z-20 ${box}`}>
      <svg viewBox={viewBox} className="absolute inset-0 h-full w-full" aria-hidden="true">
        <path d={path} className="fill-white stroke-[#0f5fff] stroke-[9]" strokeLinejoin="round" />
      </svg>
      <p dir="rtl" lang="fa" className={`absolute flex items-center justify-center gap-2 whitespace-nowrap font-['DejaVu_Sans_Condensed','DejaVu_Sans',sans-serif] text-[32px] text-[#0f5fff] [-webkit-text-stroke:1px_#0f5fff] ${text}`}>
        {children}
      </p>
    </div>
  );
}

function Callouts() {
  return (
    <>
      <Callout
        box="top-[50px] left-0 h-[90px] w-[280px]"
        viewBox="0 50 280 90"
        path="M8 92Q7 75 50 74L212 72Q225 70 263 61L240 87L241 116Q241 128 215 128L55 131Q8 130 8 118Z"
        text="top-[26px] left-[29px] h-11 w-[180px]"
      >
        <bdi>اجرای</bdi>
        <bdi className="font-['Open_Sans',sans-serif] text-[30px]">Query</bdi>
      </Callout>
      <Callout
        box="top-[70px] left-[560px] h-[110px] w-[350px]"
        viewBox="560 70 350 110"
        path="M602 100Q600 85 630 85L840 84Q890 86 890 98V136Q888 149 840 151L640 154Q615 157 573 168Q580 155 602 135Z"
        text="top-[24px] left-[46px] h-11 w-[280px]"
      >
        انتخاب لایه مورد نظر
      </Callout>
      <Callout
        box="top-[160px] left-[555px] h-[120px] w-[395px]"
        viewBox="555 160 395 120"
        path="M602 190Q600 175 630 174L860 171Q928 174 931 186L930 228Q928 243 860 247L650 251Q620 254 569 268Q575 255 602 231Z"
        text="top-[24px] left-[58px] h-11 w-[310px]"
      >
        انتخاب لایه حذف کننده
      </Callout>
      <Callout
        box="top-[135px] right-[200px] h-[125px] w-[400px]"
        viewBox="1960 135 400 125"
        path="M1973 188Q1970 169 2040 168L2262 165Q2275 165 2346 148Q2345 155 2312 185L2313 230Q2312 245 2285 245L2040 247Q1973 246 1973 230Z"
        text="top-[49px] left-[38px] h-11 w-[292px]"
      >
        ذخیره لایه اصلاح شده
      </Callout>
      <Callout
        box="bottom-[150px] left-[1060px] h-[120px] w-[380px]"
        viewBox="1060 990 380 120"
        path="M1070 1040Q1068 1025 1120 1024L1350 1020Q1370 1019 1425 1004Q1426 1010 1392 1040L1393 1082Q1392 1096 1365 1097L1120 1099Q1068 1098 1070 1084Z"
        text="top-[44px] left-[38px] h-11 w-[260px]"
      >
        نمایش خروجی ابزار
      </Callout>
    </>
  );
}

/* ------------------------------------------------------------------ */

export default function App() {
  return (
    <div className={`relative flex h-screen flex-col overflow-hidden bg-[#ededed] ${FONT}`}>
      <Header />
      <div className="h-[55px] shrink-0 bg-[#ebeae8]" />
      <main className="flex min-h-0 flex-1 flex-col">
        <div className="flex h-[353px] shrink-0">
          <div className="flex w-3 flex-col items-center pt-[131px]"><Dots vertical /></div>
          <form className="flex flex-1 flex-col gap-8 bg-[#f8f7f6] pt-[17px] pl-[13px]">
            <ParamField name="layer" value="golestan_highway_1" />
            <ParamField name="erase" value="golestan_park" />
          </form>
        </div>
        <div className="flex h-3 shrink-0 items-center justify-center"><Dots /></div>
        <div className="grid min-h-0 flex-1 grid-cols-[minmax(0,1276fr)_11px_minmax(0,1273fr)] grid-rows-[minmax(0,1fr)]">
          <ResultsPanel />
          <div className="flex items-center justify-center"><Dots vertical /></div>
          <MapView />
        </div>
      </main>
      <Callouts />
    </div>
  );
}
